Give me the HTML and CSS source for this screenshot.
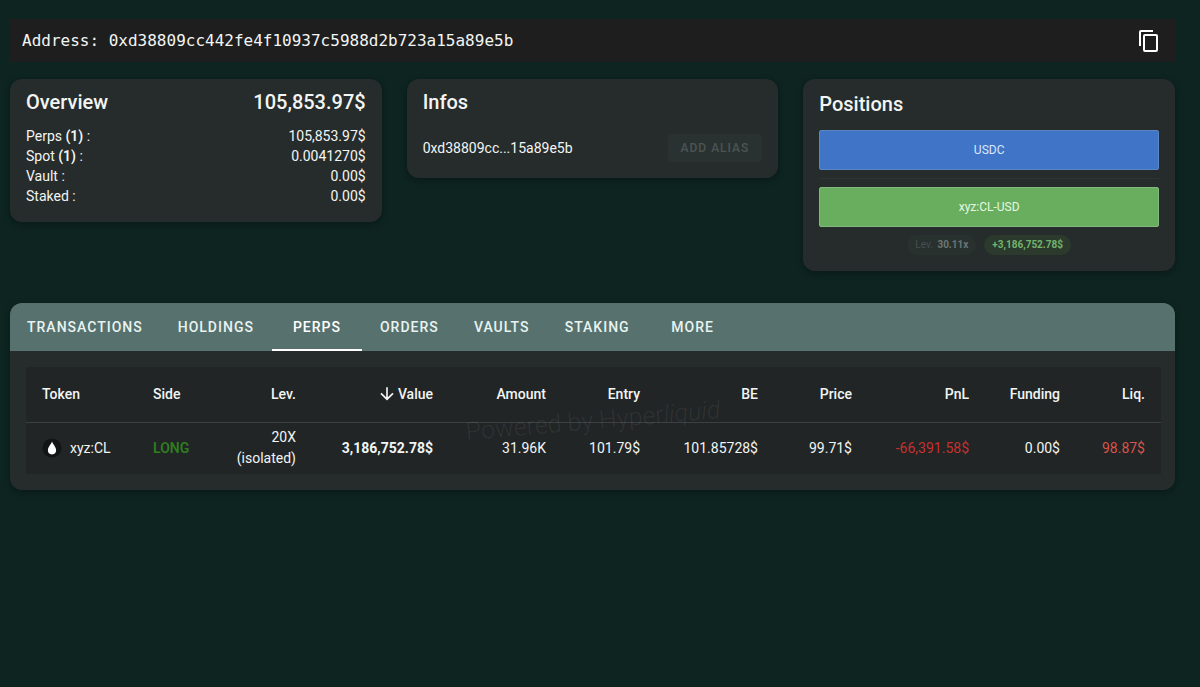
FILE: index.html
```
<!DOCTYPE html>
<html lang="en">
<head>
    <meta charset="UTF-8">
    <meta name="viewport" content="width=device-width, initial-scale=1.0">
    <title>Address 0xd38809cc...15a89e5b</title>
    <link rel="stylesheet" href="styles.css">
</head>
<body>
    <main class="page">
        <!-- Address bar -->
        <div class="address-bar">
            <span class="address">Address: 0xd38809cc442fe4f10937c5988d2b723a15a89e5b</span>
            <button class="copy-btn" type="button" aria-label="Copy address">
                <svg viewBox="0 0 24 24" width="24" height="24" fill="currentColor">
                    <path d="M19 21H8V7h11m0-2H8a2 2 0 0 0-2 2v14a2 2 0 0 0 2 2h11a2 2 0 0 0 2-2V7a2 2 0 0 0-2-2m-3-4H4a2 2 0 0 0-2 2v14h2V3h12V1z"/>
                </svg>
            </button>
        </div>

        <!-- Summary cards -->
        <div class="cards">
            <section class="card">
                <div class="card-head">
                    <h2>Overview</h2>
                    <span class="total">105,853.97$</span>
                </div>
                <div class="line"><span>Perps <b>(1)</b> :</span><span>105,853.97$</span></div>
                <div class="line"><span>Spot <b>(1)</b> :</span><span>0.0041270$</span></div>
                <div class="line"><span>Vault :</span><span>0.00$</span></div>
                <div class="line"><span>Staked :</span><span>0.00$</span></div>
            </section>

            <section class="card">
                <div class="card-head">
                    <h2>Infos</h2>
                </div>
                <div class="alias">
                    <span>0xd38809cc...15a89e5b</span>
                    <button class="alias-btn" type="button" disabled>ADD ALIAS</button>
                </div>
            </section>

            <section class="card positions">
                <h2>Positions</h2>
                <div class="bar bar-blue">USDC</div>
                <hr class="divider">
                <div class="bar bar-green">xyz:CL-USD</div>
                <div class="chips">
                    <span class="chip">Lev. <b>30.11x</b></span>
                    <span class="chip chip-green">+3,186,752.78$</span>
                </div>
            </section>
        </div>

        <!-- Tabs and perps table -->
        <section class="panel">
            <nav class="tabs">
                <button class="tab" type="button">TRANSACTIONS</button>
                <button class="tab" type="button">HOLDINGS</button>
                <button class="tab active" type="button">PERPS</button>
                <button class="tab" type="button">ORDERS</button>
                <button class="tab" type="button">VAULTS</button>
                <button class="tab" type="button">STAKING</button>
                <button class="tab" type="button">MORE</button>
            </nav>
            <div class="panel-body">
                <table class="perps">
                    <colgroup>
                        <col class="col-token">
                        <col class="col-side">
                        <col class="col-lev">
                        <col class="col-value">
                        <col class="col-amount">
                        <col class="col-entry">
                        <col class="col-be">
                        <col class="col-price">
                        <col class="col-pnl">
                        <col class="col-funding">
                        <col class="col-liq">
                    </colgroup>
                    <thead>
                        <tr>
                            <th class="left">Token</th>
                            <th class="left">Side</th>
                            <th>Lev.</th>
                            <th>
                                <span class="sorted">
                                    <svg viewBox="0 0 24 24" width="20" height="20" fill="currentColor">
                                        <path d="M11 4h2v12l5.500-5.500 1.420 1.420L12 19.840l-7.920-7.920L5.500 10.500 11 16V4z"/>
                                    </svg>Value
                                </span>
                            </th>
                            <th>Amount</th>
                            <th>Entry</th>
                            <th>BE</th>
                            <th>Price</th>
                            <th>PnL</th>
                            <th>Funding</th>
                            <th>Liq.</th>
                        </tr>
                    </thead>
                    <tbody>
                        <tr>
                            <td class="left">
                                <span class="token">
                                    <svg viewBox="0 0 20 20" width="20" height="20">
                                        <circle cx="10" cy="10" r="9.500" fill="#121516"/>
                                        <path d="M10 3.500C9.300 6 5.900 8.800 5.900 12.300a4.100 4.100 0 0 0 8.200 0C14.100 8.800 10.700 6 10 3.500z" fill="#fff"/>
                                    </svg>
                                    xyz:CL
                                </span>
                            </td>
                            <td class="left long">LONG</td>
                            <td>20X<br>(isolated)</td>
                            <td class="strong">3,186,752.78$</td>
                            <td>31.96K</td>
                            <td>101.79$</td>
                            <td>101.85728$</td>
                            <td>99.71$</td>
                            <td class="loss">-66,391.58$</td>
                            <td>0.00$</td>
                            <td class="liq">98.87$</td>
                        </tr>
                    </tbody>
                </table>
                <div class="watermark">Powered by Hyper<i>liquid</i></div>
            </div>
        </section>
    </main>
</body>
</html>
```
FILE: styles.css
```
* {
    box-sizing: border-box;
}

body {
    margin: 0;
    min-height: 100vh;
    background: #0d2420;
    color: #f2f5f4;
    font-family: Roboto, "Liberation Sans", sans-serif;
    font-size: 14px;
    line-height: 20px;
}

button {
    border: 0;
    background: none;
    color: inherit;
    font-family: inherit;
    font-size: 14px;
}

h2 {
    margin: 0;
    font-size: 20px;
    font-weight: 500;
    line-height: 32px;
}

.page {
    padding: 19px 25px 19px 10px;
}

/* Address bar */
.address-bar {
    display: flex;
    align-items: center;
    justify-content: space-between;
    height: 43px;
    padding: 0 14px 0 12px;
    background: #1e1e1e;
}

.address {
    font-family: "DejaVu Sans Mono", monospace;
    font-size: 16px;
}

.copy-btn {
    display: flex;
    padding: 0;
    color: #fff;
}

/* Summary cards */
.cards {
    display: grid;
    grid-template-columns: repeat(3, 1fr);
    align-items: start;
    gap: 25px;
    margin-top: 17px;
}

.card {
    padding: 7px 16px 16px;
    border-radius: 12px;
    background: #262c2b;
    box-shadow: 0 2px 6px rgba(0, 0, 0, 0.3);
}

.card-head {
    display: flex;
    justify-content: space-between;
    margin-bottom: 8px;
}

.total {
    font-size: 20px;
    font-weight: 500;
    line-height: 32px;
}

.line {
    display: flex;
    justify-content: space-between;
}

.line b {
    font-weight: 600;
}

.alias {
    display: flex;
    align-items: center;
    justify-content: space-between;
    padding-top: 8px;
}

.alias-btn {
    height: 28px;
    padding: 0 13px;
    border-radius: 4px;
    background: #2a3231;
    color: #4a5553;
    font-size: 12px;
    font-weight: 500;
    letter-spacing: 1px;
}

.positions {
    padding-top: 9px;
}

.bar {
    display: flex;
    align-items: center;
    justify-content: center;
    height: 40px;
    border: 1px solid;
    border-radius: 2px;
    font-size: 12px;
}

.bar-blue {
    margin-top: 10px;
    border-color: #5a86c4;
    background: #3f74c6;
    color: #dbe8fb;
}

.bar-green {
    border-color: #83b97b;
    background: #68ae5e;
    color: #e6f7e2;
}

.divider {
    height: 1px;
    margin: 8px 0;
    border: 0;
    background: #2e3433;
}

.chips {
    display: flex;
    justify-content: center;
    gap: 8px;
    margin-top: 8px;
}

.chip {
    padding: 0 8px;
    border-radius: 10px;
    background: #29312f;
    color: #46504e;
    font-size: 10px;
}

.chip b {
    margin-left: 2px;
    color: #6b7674;
}

.chip-green {
    background: #2b3a2c;
    color: #74b36c;
    font-weight: 700;
}

/* Tabs */
.panel {
    overflow: hidden;
    margin-top: 32px;
    border-radius: 12px;
    background: #262c2b;
    box-shadow: 0 2px 6px rgba(0, 0, 0, 0.3);
}

.tabs {
    display: flex;
    gap: 1px;
    background: #57726e;
}

.tab {
    min-width: 90px;
    height: 48px;
    padding: 2px 17px 0;
    border-bottom: 2px solid transparent;
    color: #e9f3f1;
    font-weight: 500;
    letter-spacing: 1px;
}

.tab.active {
    border-bottom-color: #fff;
    color: #fff;
}

/* Perps table */
.panel-body {
    position: relative;
    padding: 16px;
}

.perps {
    width: 100%;
    table-layout: fixed;
    border-collapse: collapse;
    background: #212526;
}

.perps th,
.perps td {
    padding: 0 16px;
    line-height: 21px;
    text-align: right;
}

.perps th {
    height: 55px;
    border-bottom: 1px solid #3b4040;
    font-weight: 500;
}

.perps td {
    height: 52px;
}

.perps .left {
    text-align: left;
}

.col-token { width: 111px; }
.col-side { width: 82px; }
.col-lev { width: 93px; }
.col-value { width: 137px; }
.col-amount { width: 113px; }
.col-entry { width: 94px; }
.col-be { width: 118px; }
.col-price { width: 94px; }
.col-pnl { width: 117px; }
.col-funding { width: 91px; }
.col-liq { width: 85px; }

.sorted {
    display: flex;
    align-items: center;
    justify-content: flex-end;
    gap: 1px;
}

.token {
    display: flex;
    align-items: center;
    gap: 8px;
}

.long {
    color: #2f7d1f;
    font-weight: 600;
}

.strong {
    font-weight: 700;
}

.loss {
    color: #c9302c;
}

.liq {
    color: #d9534a;
}

/* Faint label laid over the table */
.watermark {
    position: absolute;
    top: 50%;
    left: 50%;
    transform: translate(-50%, -50%) rotate(-5deg);
    color: rgba(255, 255, 255, 0.07);
    font-size: 25px;
    font-weight: 300;
    white-space: nowrap;
    pointer-events: none;
}
```
